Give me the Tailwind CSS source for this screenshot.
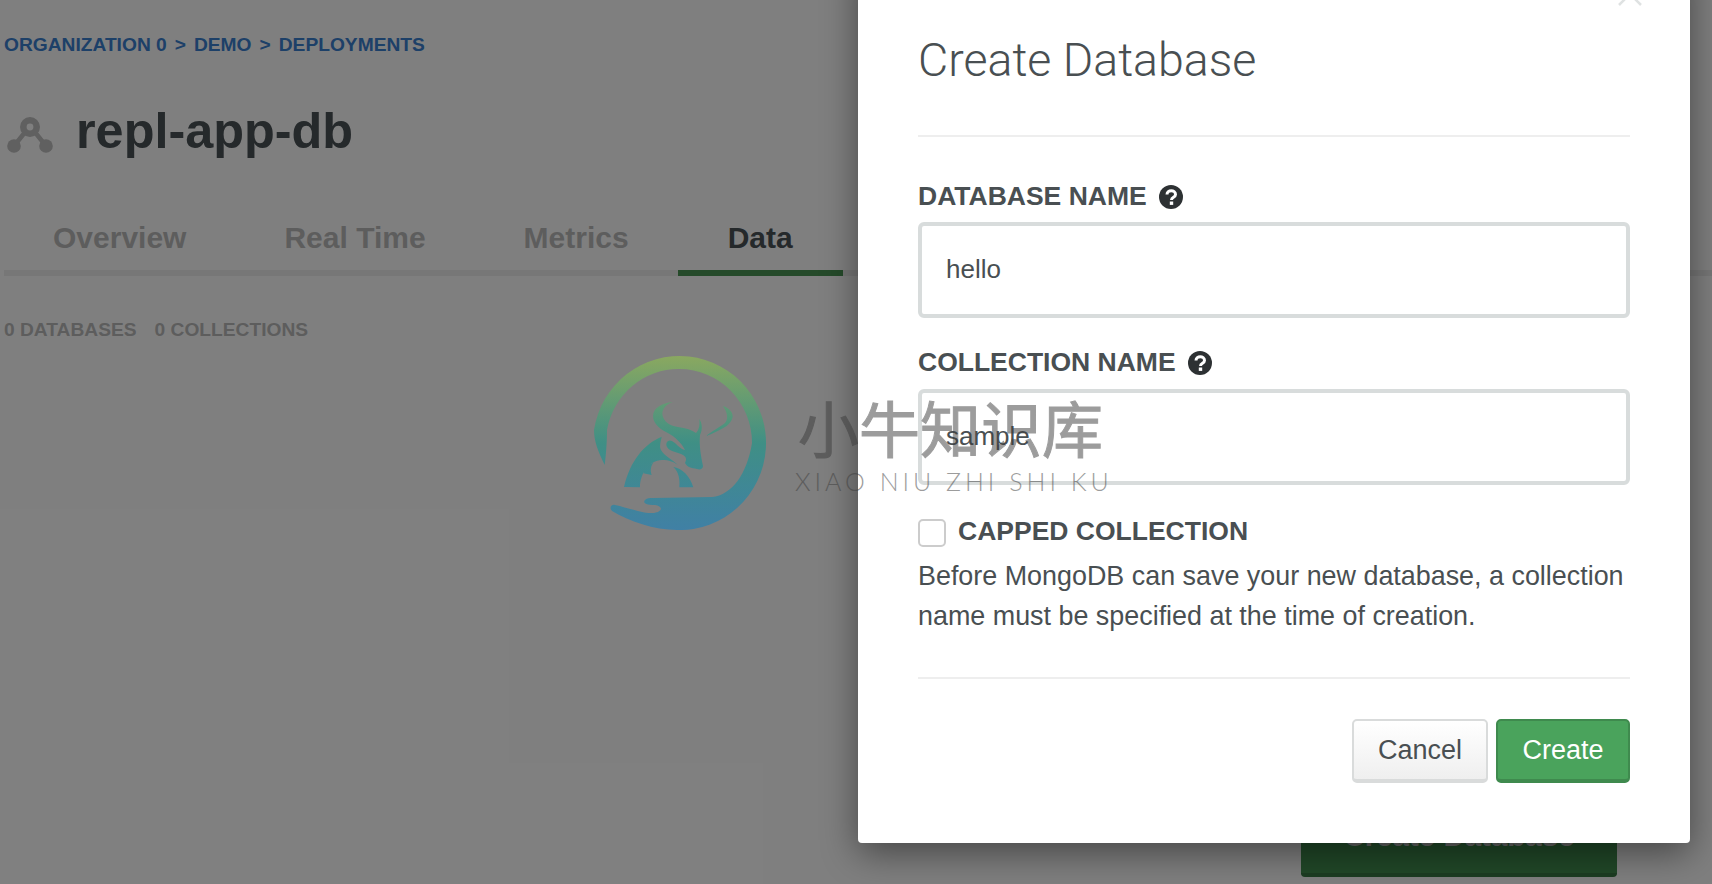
<!DOCTYPE html>
<html lang="en">
<head>
    <meta charset="UTF-8">
    <title>Create Database</title>
    <script src="https://cdn.jsdelivr.net/npm/@tailwindcss/browser@4"></script>
</head>
<body class="w-full">
<div class="relative w-[1712px] h-[884px] overflow-hidden bg-white font-['Liberation_Sans',sans-serif]">

    <!-- Page behind the modal -->
    <div class="pl-1 pt-[34px]">
        <div class="flex gap-[8px] text-[19.2px] leading-[22px] font-bold text-[#3a80d0]">
            <span>ORGANIZATION 0</span><span>&gt;</span><span>DEMO</span><span>&gt;</span><span>DEPLOYMENTS</span>
        </div>
        <div class="flex items-center mt-[41px] h-[64px]">
            <svg class="w-[46px] h-[36px] ml-[3px] mt-[12px]" viewBox="0 0 46 36" fill="none">
                <path d="M19 14 L7 29 M27 14 L39 29" stroke="#c0c0c0" stroke-width="4.5"/>
                <circle cx="23" cy="10" r="6.7" stroke="#c0c0c0" stroke-width="6.6"/>
                <circle cx="7" cy="29" r="6.8" fill="#c0c0c0"/>
                <circle cx="39" cy="29" r="6.8" fill="#c0c0c0"/>
            </svg>
            <h1 class="ml-[23px] mt-[4px] text-[50.4px] leading-[64px] font-bold text-[#4a5256]">repl-app-db</h1>
        </div>
        <div class="flex mt-[39px] h-[76px] border-b-[6px] border-[#eeeeee] text-[30px] font-bold text-[#bbbbbb]">
            <div class="px-[49px] pt-[15px]">Overview</div>
            <div class="px-[49px] pt-[15px]">Real Time</div>
            <div class="px-[49px] pt-[15px]">Metrics</div>
            <div class="w-[165px] text-center pt-[15px] h-[76px] border-b-[6px] border-[#4a9455] text-[#4a5256]">Data</div>
        </div>
        <div class="flex gap-[18px] mt-[43px] text-[19.2px] leading-[22px] font-bold text-[#bbbbbb]">
            <span>0 DATABASES</span><span>0 COLLECTIONS</span>
        </div>
    </div>

    <!-- Button the modal covers -->
    <div class="absolute left-[1301px] top-[800px] w-[316px] h-[77px] rounded-[4px] bg-[#429050] border-b-[4px] border-[#387a44] text-center text-[29.5px] leading-[72px] font-bold text-[#cccccc]">Create Database</div>

    <div class="absolute inset-0 bg-black/50"></div>

    <!-- Modal -->
    <div class="absolute left-[858px] top-[-40px] w-[832px] h-[883px] bg-white rounded-[4px] shadow-[0_10px_36px_rgba(0,0,0,0.45)] px-[60px]">
        <svg class="absolute right-[48px] top-[22px] w-[24px] h-[24px]" viewBox="0 0 24 24" fill="none" stroke="#dfe2e2" stroke-width="2.5">
            <path d="M1 1 L23 23 M23 1 L1 23"/>
        </svg>
        <h2 class="pt-[76px] h-[177px] border-b-2 border-[#eeeeee] text-[46.5px] leading-[48px] font-light font-['Roboto',sans-serif] text-[#494f52]">Create Database</h2>

        <label class="flex items-center gap-[12px] mt-[45px] h-[30px] text-[26.5px] font-bold text-[#494f52]">
            DATABASE NAME
            <svg class="w-[24px] h-[24px]" viewBox="0 0 24 24">
                <circle cx="12" cy="12" r="12" fill="#2d3133"/>
                <path d="M8 9.5 C8 4.5 16.5 4.5 16.5 9.5 C16.5 12.5 12.5 12 12.5 15" fill="none" stroke="#fff" stroke-width="3"/>
                <rect x="10.8" y="16.5" width="3.4" height="3.4" fill="#fff"/>
            </svg>
        </label>
        <div class="mt-[10px] h-[96px] border-[4px] border-[#d8dcdc] rounded-[6px] pl-[24px] pb-[2px] flex items-center text-[26px] text-[#494f52]">hello</div>

        <label class="flex items-center gap-[12px] mt-[30px] h-[30px] text-[26.5px] font-bold text-[#494f52]">
            COLLECTION NAME
            <svg class="w-[24px] h-[24px]" viewBox="0 0 24 24">
                <circle cx="12" cy="12" r="12" fill="#2d3133"/>
                <path d="M8 9.5 C8 4.5 16.5 4.5 16.5 9.5 C16.5 12.5 12.5 12 12.5 15" fill="none" stroke="#fff" stroke-width="3"/>
                <rect x="10.8" y="16.5" width="3.4" height="3.4" fill="#fff"/>
            </svg>
        </label>
        <div class="mt-[11px] h-[96px] border-[4px] border-[#d8dcdc] rounded-[6px] pl-[24px] pb-[2px] flex items-center text-[26px] text-[#494f52]">sample</div>

        <div class="flex items-center gap-[12px] mt-[33px] h-[30px]">
            <span class="w-[28px] h-[28px] border-2 border-[#cccccc] rounded-[5px]"></span>
            <span class="pb-[2px] text-[26.5px] font-bold text-[#494f52]">CAPPED COLLECTION</span>
        </div>
        <p class="mt-[8px] text-[26.9px] leading-[40px] text-[#494f52]">Before MongoDB can save your new database, a collection name must be specified at the time of creation.</p>

        <div class="mt-[41px] border-t-2 border-[#eeeeee]"></div>

        <div class="flex justify-end gap-[8px] mt-[40px]">
            <button class="w-[136px] h-[64px] rounded-[5px] border-2 border-b-[4px] border-[#d9dbdb] bg-gradient-to-b from-white to-[#efefef] text-[27px] text-[#494f52]">Cancel</button>
            <button class="w-[134px] h-[64px] rounded-[5px] border-2 border-b-[4px] border-[#3f8a4e] bg-[#4aa35c] text-[27px] text-white">Create</button>
        </div>
    </div>

    <!-- Watermark -->
    <div class="absolute left-[594px] top-[356px] flex pointer-events-none">
        <svg class="w-[173px] h-[174px]" viewBox="0 0 173 174">
            <defs>
                <linearGradient id="wm" x1="0" y1="0" x2="0" y2="174" gradientUnits="userSpaceOnUse">
                    <stop offset="0" stop-color="#8aa860"/>
                    <stop offset="0.5" stop-color="#3f8f85"/>
                    <stop offset="1" stop-color="#4080a5"/>
                </linearGradient>
            </defs>
            <g fill="url(#wm)">
                <path d="M10.7 109 C4 95 0 85 0 74 A86.5 87 0 1 1 83 174 C60 174 35 165 18 155 C15 152 17 148 21 149 C35 152 50 158 60 157 C70 155 68 150 61 149 C50 149 49 146 51 144 C53 142 56 142 58 142 L118 141 C138 139 153 118 158 87 A72.5 74 0 0 0 85.5 13 A72.5 74 0 0 0 13 74 C13 85 12 100 10.7 109 Z"/>
                <!-- bull -->
                <path d="M78.7 46 C70 49 67 55 69 61 C72 68 78 70 84 71 C92 72 98 74 102 77 C105 74 106 69 105.3 63 C108 67 109 73 106 79 C105 90 107 100 109 110 C109 113 106 114 103 113 C97 112 93 111 91 107 C93 103 92 101 89 99 C84 96 76 96 73 91 C71 87 74 83 78 85 C82 87 86 93 91 94 C88 88 82 81 72 76 C64 72 59 66 59 60 C59 52 68 47 78.7 46 Z"/>
                <path d="M67.7 80.7 C50 88 36 105 30 131 L46 131.3 C46 118 55 104 68 104 C75 104 80 106 84 109 C78 103 70 100 67 94 C65 90 67 85 67.7 80.7 Z"/>
                <path d="M79.3 111 C88 112 96 120 99.3 131.3 L85.3 131.3 C86 124 85 116 79.3 111 Z"/>
                <path d="M59.3 106.7 C54 108 50 113 49.3 117.3 L57.7 119 C56 114 57 110 59.3 106.7 Z"/>
                <path d="M128.7 50 C135 52 139 56 138.7 61 C138 65 135 68 132.7 70 C126 74 118 78 112 80 C118 75 126 71 131 67 C135 63 133 55 128.7 50 Z"/>
            </g>
        </svg>
        <div class="ml-[31px] mt-[30px] text-[#3c3c3c] opacity-50">
            <div class="text-[61px] leading-[82px] font-['Noto_Sans_CJK_SC',sans-serif] [-webkit-text-stroke:1px_#3c3c3c]">小牛知识库</div>
            <div class="ml-[-3px] mt-[-2px] whitespace-nowrap text-[25px] leading-[30px] tracking-[4px] font-light font-['Lato',sans-serif]">XIAO NIU ZHI SHI KU</div>
        </div>
    </div>
</div>
</body>
</html>
